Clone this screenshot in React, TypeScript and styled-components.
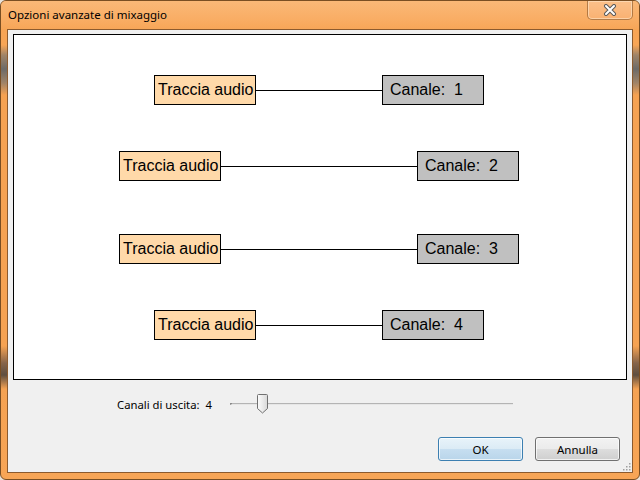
import React from 'react';
import styled, { createGlobalStyle } from 'styled-components';

const GlobalStyle = createGlobalStyle`
  html, body {
    margin: 0;
    padding: 0;
    background: #e9e2da;
  }
  body {
    width: 640px;
    height: 480px;
    overflow: hidden;
  }
`;

const Window = styled.div`
  position: relative;
  width: 640px;
  height: 480px;
  box-sizing: border-box;
  display: flex;
  flex-direction: column;
  padding: 0 6px 6px 6px;
  border: 1px solid #7a4e22;
  border-radius: 6px;
  background: linear-gradient(
    to bottom,
    #f7a556 0px,
    #f7a556 44px,
    #a08468 54px,
    #6c6a68 68px,
    #a08468 82px,
    #f5a252 94px,
    #f5a252 345px,
    #86644a 362px,
    #5e4e40 374px,
    #f5a252 388px,
    #f7a556 100%
  );
  font-family: 'Noto Sans', 'Liberation Sans', sans-serif;
`;

const TitleBar = styled.div`
  height: 28px;
  margin: 0 -6px;
  display: flex;
  align-items: flex-start;
  border-radius: 5px 5px 0 0;
  background: linear-gradient(to bottom, #fab877 0%, #f9ae66 60%, #f7a658 100%);
`;

const Title = styled.div`
  padding: 6px 0 0 7px;
  font-size: 11.5px;
  line-height: 16px;
  color: #000;
`;

const CloseButton = styled.div`
  margin-left: auto;
  margin-right: 6px;
  width: 46px;
  height: 19px;
  box-sizing: border-box;
  display: flex;
  align-items: center;
  justify-content: center;
  border: 1px solid rgba(120, 70, 20, 0.55);
  border-top: none;
  border-radius: 0 0 5px 5px;
  background: linear-gradient(to bottom, #fbc08a 0%, #f9b172 100%);
  box-shadow: inset 0 0 0 1px rgba(255, 230, 200, 0.6);
`;

const Client = styled.div`
  position: relative;
  flex: 1;
  display: flex;
  flex-direction: column;
  background: #f0f0f0;
  border: 1px solid #8b5a2e;
`;

const Canvas = styled.div`
  margin: 4px 5px 0 5px;
  height: 346px;
  box-sizing: border-box;
  background: #fff;
  border: 1px solid #000;
  padding: 40px 2px 0 0;
  display: flex;
  flex-direction: column;
  align-items: center;
`;

const Row = styled.div<{ $top: number }>`
  margin-top: ${(p) => p.$top}px;
  display: flex;
  align-items: center;
`;

const Node = styled.div<{ $kind: 'track' | 'channel' }>`
  width: 102px;
  height: 30px;
  box-sizing: border-box;
  border: 1px solid #000;
  background: ${(p) => (p.$kind === 'track' ? '#ffd9a9' : '#c0c0c0')};
  padding-left: ${(p) => (p.$kind === 'track' ? 3 : 7)}px;
  font-family: 'Liberation Sans', Arial, sans-serif;
  font-size: 16px;
  line-height: 28px;
  color: #000;
  white-space: pre;
`;

const Wire = styled.div<{ $len: number }>`
  width: ${(p) => p.$len}px;
  height: 1px;
  background: #000;
`;

const SliderRow = styled.div`
  height: 48px;
  display: flex;
  align-items: center;
  padding-left: 109px;
`;

const Label = styled.div`
  width: 113px;
  font-size: 11.3px;
  color: #000;
  white-space: pre;
`;

const Slider = styled.div`
  position: relative;
  width: 283px;
  height: 20px;
`;

const Track = styled.div`
  position: absolute;
  left: 0;
  right: 0;
  top: 9px;
  height: 1px;
  background: #b4b4b4;
  border-bottom: 1px solid #e6e6e6;
  border-left: 2px solid #8a8a8a;
`;

const Thumb = styled.svg`
  position: absolute;
  left: 27px;
  top: 0;
`;

const ButtonRow = styled.div`
  margin-top: 9px;
  display: flex;
  justify-content: flex-end;
  gap: 12px;
  padding-right: 12px;
`;

const Button = styled.button<{ $default?: boolean }>`
  width: 85px;
  height: 24px;
  box-sizing: border-box;
  border: 1px solid ${(p) => (p.$default ? '#3c7fb1' : '#707070')};
  border-radius: 3px;
  font-family: 'Noto Sans', 'Liberation Sans', sans-serif;
  font-size: 11.5px;
  color: #000;
  padding: 0;
  background: ${(p) =>
    p.$default
      ? 'linear-gradient(to bottom, #e8f3fa 0%, #dbebf5 50%, #c6def0 51%, #b9d5ea 100%)'
      : 'linear-gradient(to bottom, #f2f2f2 0%, #ebebeb 50%, #dddddd 51%, #cfcfcf 100%)'};
  box-shadow: inset 0 0 0 1px rgba(255, 255, 255, 0.7);
`;

const Grip = styled.svg`
  position: absolute;
  right: 1px;
  bottom: 1px;
`;

const rows = [
  { top: 0, len: 126, ch: 1 },
  { top: 46, len: 196, ch: 2 },
  { top: 53, len: 196, ch: 3 },
  { top: 46, len: 126, ch: 4 },
];

const App: React.FC = () => {
  return (
    <>
      <GlobalStyle />
      <Window>
        <TitleBar>
          <Title>Opzioni avanzate di mixaggio</Title>
          <CloseButton>
            <svg width="14" height="12" viewBox="0 0 14 12">
              <path d="M3 2 L11 10 M11 2 L3 10" stroke="#5a5a5a" strokeWidth="4" strokeLinecap="round" />
              <path d="M3 2 L11 10 M11 2 L3 10" stroke="#fff" strokeWidth="2" strokeLinecap="round" />
            </svg>
          </CloseButton>
        </TitleBar>
        <Client>
          <Canvas>
            {rows.map((r) => (
              <Row key={r.ch} $top={r.top}>
                <Node $kind="track">Traccia audio</Node>
                <Wire $len={r.len} />
                <Node $kind="channel">{`Canale:  ${r.ch}`}</Node>
              </Row>
            ))}
          </Canvas>
          <SliderRow>
            <Label>{'Canali di uscita:  4'}</Label>
            <Slider>
              <Track />
              <Thumb width="11" height="20" viewBox="0 0 11 20">
                <defs>
                  <linearGradient id="thumbFill" x1="0" y1="0" x2="1" y2="0">
                    <stop offset="0" stopColor="#fdfdfd" />
                    <stop offset="1" stopColor="#d8d8d8" />
                  </linearGradient>
                </defs>
                <path
                  d="M0.5 1.5 Q0.5 0.5 1.5 0.5 H9.5 Q10.5 0.5 10.5 1.5 V14.5 L5.5 19 L0.5 14.5 Z"
                  fill="url(#thumbFill)"
                  stroke="#707070"
                />
              </Thumb>
            </Slider>
          </SliderRow>
          <ButtonRow>
            <Button $default>OK</Button>
            <Button>Annulla</Button>
          </ButtonRow>
          <Grip width="10" height="10" viewBox="0 0 10 10">
            {[
              [8, 2],
              [8, 5],
              [5, 5],
              [8, 8],
              [5, 8],
              [2, 8],
            ].map(([x, y]) => (
              <rect key={`${x}-${y}`} x={x} y={y} width="1.5" height="1.5" fill="#a0a0a0" />
            ))}
          </Grip>
        </Client>
      </Window>
    </>
  );
};

export default App;
